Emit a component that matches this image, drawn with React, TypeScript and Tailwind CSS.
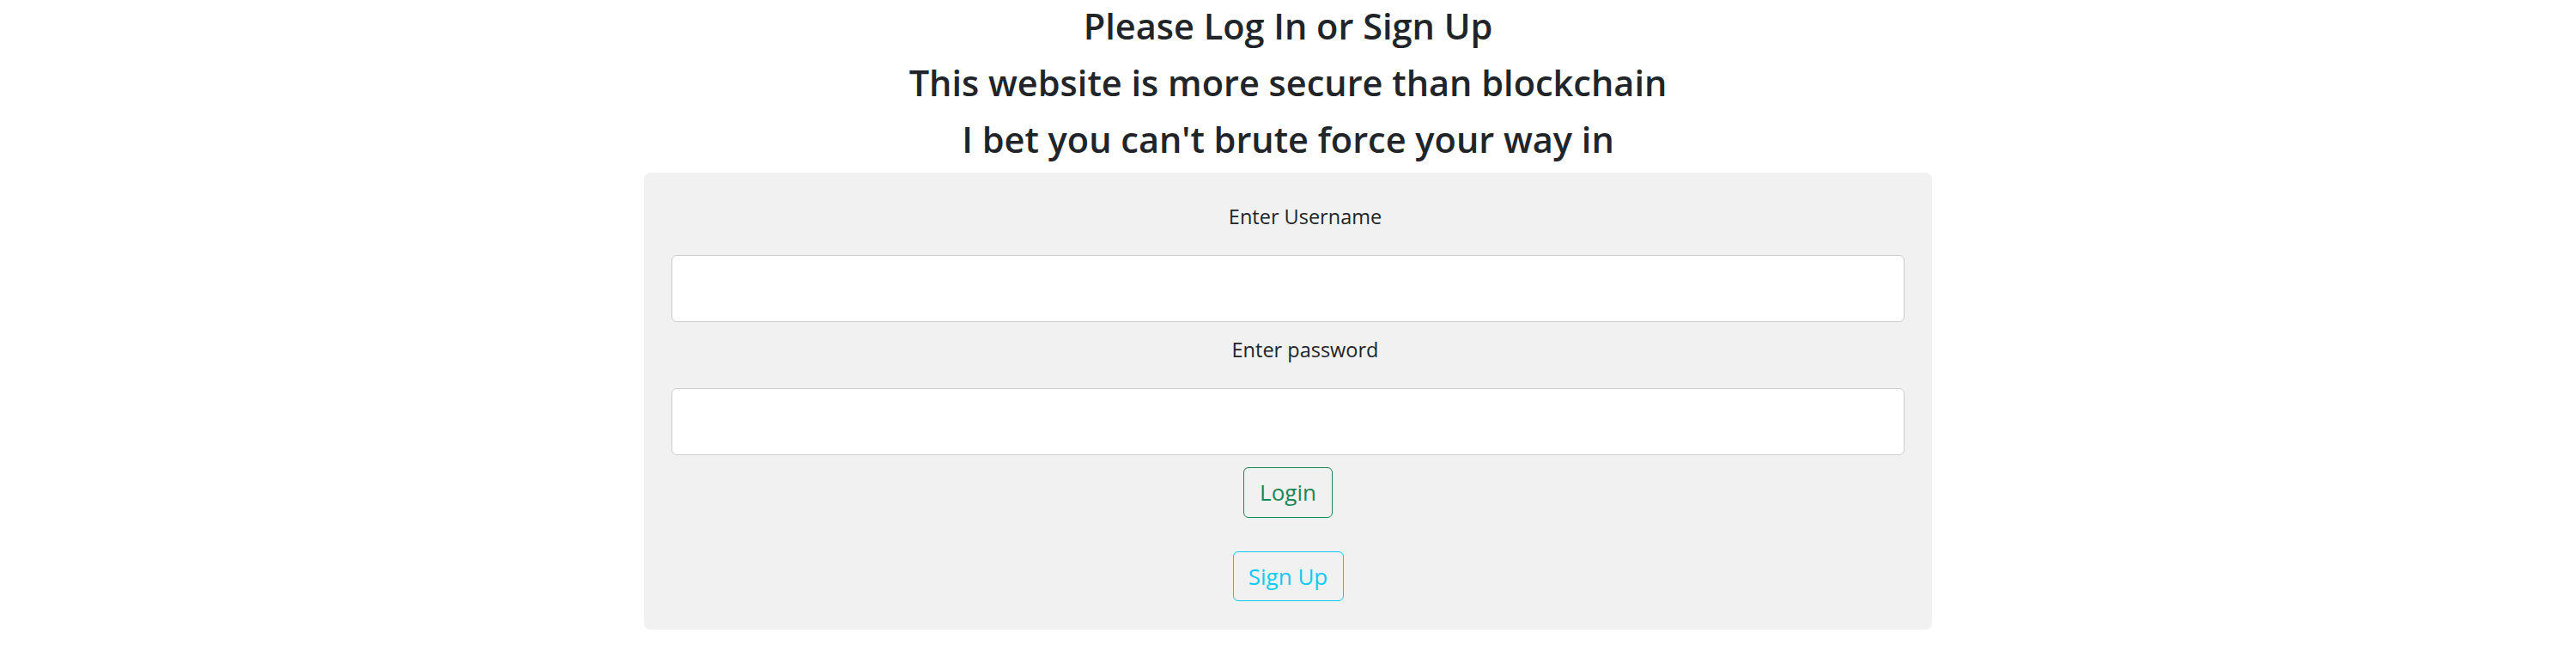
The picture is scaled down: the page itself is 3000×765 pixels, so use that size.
import React from "react";

const headings = [
  "Please Log In or Sign Up",
  "This website is more secure than blockchain",
  "I bet you can't brute force your way in",
];

export default function App() {
  return (
    <div className="min-h-screen w-full bg-white text-[#212529] font-['Segoe_UI','Open_Sans',sans-serif]">
      <div className="flex flex-col items-center pt-[6px]">
        {headings.map((text) => (
          <h2
            key={text}
            className="m-0 mb-[18px] text-[41.5px] leading-[48px] font-semibold text-center"
          >
            {text}
          </h2>
        ))}
      </div>
      <div className="mx-auto mt-[-3px] w-[1500px] rounded-[8px] bg-[#f1f1f1] px-[32px] pt-[19px] pb-[33px]">
        <div className="pt-[11px] pb-[24px] pl-[40px] text-center text-[23.5px] leading-[42px]">
          Enter Username
        </div>
        <input
          type="text"
          className="block h-[78px] w-full rounded-[6px] border-[1.5px] border-[#cbced1] bg-white px-4 text-[28px] outline-none"
        />
        <div className="pt-[11px] pb-[24px] pl-[40px] text-center text-[23.5px] leading-[42px]">
          Enter password
        </div>
        <input
          type="password"
          className="block h-[78px] w-full rounded-[6px] border-[1.5px] border-[#cbced1] bg-white px-4 text-[28px] outline-none"
        />
        <div className="flex flex-col items-center pt-[14px] gap-[39px]">
          <button className="h-[59px] w-[104px] rounded-[6px] border-[1.5px] border-[#198754] bg-transparent text-[26px] text-[#198754]">
            Login
          </button>
          <button className="h-[58px] w-[129px] rounded-[6px] border-[1.5px] border-[#0dcaf0] bg-transparent text-[26px] text-[#0dcaf0]">
            Sign Up
          </button>
        </div>
      </div>
    </div>
  );
}
